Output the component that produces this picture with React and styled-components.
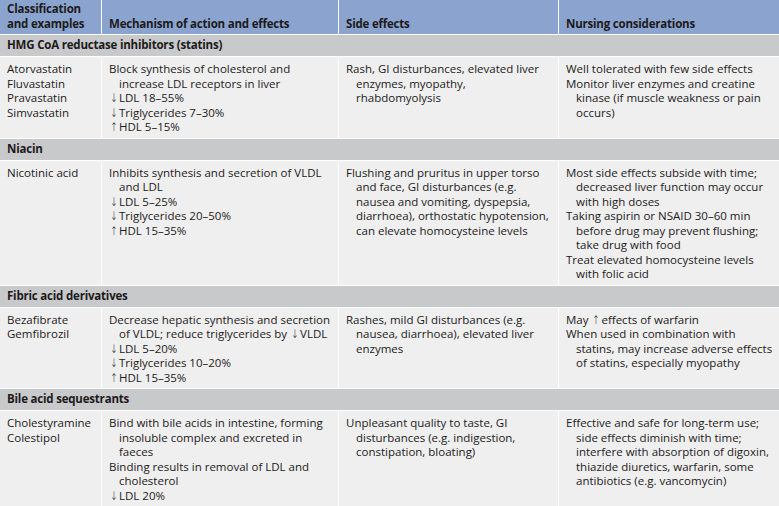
import React from "react";
import styled, { createGlobalStyle } from "styled-components";

const GlobalStyle = createGlobalStyle`
  html, body { margin: 0; padding: 0; background: #ffffff; }
  body {
    font-family: "Open Sans", "Noto Sans", sans-serif;
    font-size: 11.5px;
    line-height: 14.5px;
    color: #1d1a1b;
  }
`;

const Table = styled.div`
  display: grid;
  grid-template-columns: 101px 236px 219px 1fr;
  gap: 1px;
  background: #ffffff;
  width: 779px;
`;

const HeadCell = styled.div`
  box-sizing: border-box;
  min-height: 34px;
  display: flex;
  align-items: flex-end;
  padding: 0 7px 3px;
  background: #8ba4cf;
  font-weight: 700;
  letter-spacing: -0.2px;
`;

const Section = styled.div`
  grid-column: 1 / -1;
  box-sizing: border-box;
  height: 21px;
  display: flex;
  align-items: center;
  padding: 0 7px;
  background: #c8c9cb;
  font-weight: 700;
  letter-spacing: -0.2px;
`;

const Cell = styled.div`
  background: #efefef;
  padding: 5px 7px 3px;
`;

const Item = styled.div`
  padding-left: 10px;
  text-indent: -10px;
  white-space: nowrap;
`;

const Arrow = styled.span`
  font-family: "DejaVu Sans", sans-serif;
  font-size: 12px;
  font-weight: 300;
  display: inline-block;
  width: 7px;
  text-indent: 0;
  text-align: center;
  line-height: 1;
  transform: scaleX(0.75);
`;

const withArrows = (s) => {
  const parts = s.split(/([↑↓])/);
  return parts.map((p, i) =>
    p === "↑" || p === "↓" ? <Arrow key={i}>{p}</Arrow> : <React.Fragment key={i}>{p}</React.Fragment>
  );
};

const groups = [
  {
    title: "HMG CoA reductase inhibitors (statins)",
    cols: [
      [["Atorvastatin"], ["Fluvastatin"], ["Pravastatin"], ["Simvastatin"]],
      [
        ["Block synthesis of cholesterol and", "increase LDL receptors in liver"],
        ["↓ LDL 18–55%"],
        ["↓ Triglycerides 7–30%"],
        ["↑ HDL 5–15%"],
      ],
      [["Rash, GI disturbances, elevated liver", "enzymes, myopathy,", "rhabdomyolysis"]],
      [
        ["Well tolerated with few side effects"],
        ["Monitor liver enzymes and creatine", "kinase (if muscle weakness or pain", "occurs)"],
      ],
    ],
  },
  {
    title: "Niacin",
    cols: [
      [["Nicotinic acid"]],
      [
        ["Inhibits synthesis and secretion of VLDL", "and LDL"],
        ["↓ LDL 5–25%"],
        ["↓ Triglycerides 20–50%"],
        ["↑ HDL 15–35%"],
      ],
      [
        [
          "Flushing and pruritus in upper torso",
          "and face, GI disturbances (e.g.",
          "nausea and vomiting, dyspepsia,",
          "diarrhoea), orthostatic hypotension,",
          "can elevate homocysteine levels",
        ],
      ],
      [
        ["Most side effects subside with time;", "decreased liver function may occur", "with high doses"],
        ["Taking aspirin or NSAID 30–60 min", "before drug may prevent flushing;", "take drug with food"],
        ["Treat elevated homocysteine levels", "with folic acid"],
      ],
    ],
  },
  {
    title: "Fibric acid derivatives",
    cols: [
      [["Bezafibrate"], ["Gemfibrozil"]],
      [
        ["Decrease hepatic synthesis and secretion", "of VLDL; reduce triglycerides by ↓ VLDL"],
        ["↓ LDL 5–20%"],
        ["↓ Triglycerides 10–20%"],
        ["↑ HDL 15–35%"],
      ],
      [["Rashes, mild GI disturbances (e.g.", "nausea, diarrhoea), elevated liver", "enzymes"]],
      [
        ["May ↑ effects of warfarin"],
        ["When used in combination with", "statins, may increase adverse effects", "of statins, especially myopathy"],
      ],
    ],
  },
  {
    title: "Bile acid sequestrants",
    cols: [
      [["Cholestyramine"], ["Colestipol"]],
      [
        ["Bind with bile acids in intestine, forming", "insoluble complex and excreted in", "faeces"],
        ["Binding results in removal of LDL and", "cholesterol"],
        ["↓ LDL 20%"],
      ],
      [["Unpleasant quality to taste, GI", "disturbances (e.g. indigestion,", "constipation, bloating)"]],
      [
        [
          "Effective and safe for long-term use;",
          "side effects diminish with time;",
          "interfere with absorption of digoxin,",
          "thiazide diuretics, warfarin, some",
          "antibiotics (e.g. vancomycin)",
        ],
      ],
    ],
  },
];

const headers = [
  ["Classification", "and examples"],
  ["Mechanism of action and effects"],
  ["Side effects"],
  ["Nursing considerations"],
];

export default function App() {
  return (
    <>
      <GlobalStyle />
      <Table>
        {headers.map((h, i) => (
          <HeadCell key={i}>
            <div>
              {h.map((l, j) => (
                <div key={j}>{l}</div>
              ))}
            </div>
          </HeadCell>
        ))}
        {groups.map((g) => (
          <React.Fragment key={g.title}>
            <Section>{g.title}</Section>
            {g.cols.map((items, ci) => (
              <Cell key={ci}>
                {items.map((lines, ii) => (
                  <Item key={ii}>
                    {lines.map((l, li) => (
                      <React.Fragment key={li}>
                        {li > 0 && <br />}
                        {withArrows(l)}
                      </React.Fragment>
                    ))}
                  </Item>
                ))}
              </Cell>
            ))}
          </React.Fragment>
        ))}
      </Table>
    </>
  );
}
